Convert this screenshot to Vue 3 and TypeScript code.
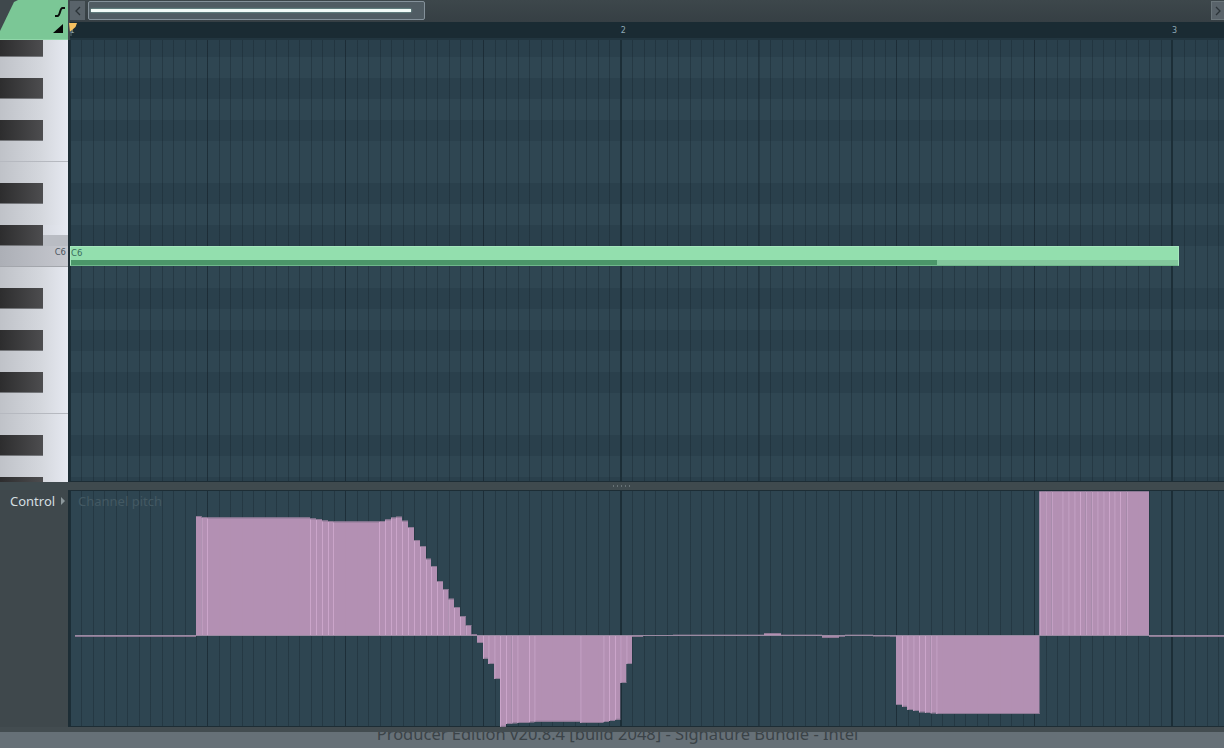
<script setup lang="ts">
// Piano roll with channel pitch lane below it
interface Row {
  black: boolean
  name: string
  split: boolean
}

// one octave from the top, first row is A#6 and it is cut by the ruler
const pattern: [boolean, string][] = [
  [true, 'A#'], [false, 'A'], [true, 'G#'], [false, 'G'], [true, 'F#'], [false, 'F'],
  [false, 'E'], [true, 'D#'], [false, 'D'], [true, 'C#'], [false, 'C'], [false, 'B'],
]

const rows: Row[] = Array.from({ length: 22 }, (_, i) => {
  const [black, name] = pattern[i % 12]
  return { black, name, split: name === 'F' }
})

const bars = [1, 2, 3]

// [x where the step starts, y of its free end], baseline is y = 635
const steps: [number, number][] = [
  [75, 636.6], [196, 516], [201.5, 517], [207, 517.5], [310, 518.5], [316, 519], [322, 520.5],
  [328, 521], [333, 521.5], [379, 521], [385, 519.5], [391, 517.5], [396, 516.7], [402, 520.7],
  [408, 527], [414, 540], [420, 546], [426, 558.7], [431, 566], [437, 581], [443, 589],
  [448.5, 598.7], [454, 607], [460, 616], [465.7, 625], [471.3, 634], [477, 643], [483, 658.7],
  [488.3, 664], [494.3, 679], [500, 726.7], [506, 724], [511.7, 723.3], [517.3, 723],
  [529, 722.3], [534.3, 721.7], [580.3, 723], [603.3, 722], [609, 721], [615, 719.7],
  [620.3, 683], [626.3, 664], [632, 636.7], [643, 636], [673, 635.6], [764, 633], [781, 635.6],
  [822, 637.7], [839, 636.5], [845, 635.6], [873, 636.3], [890, 636.5], [896, 705], [902, 706.7],
  [907.3, 710], [913.3, 711], [919, 712.3], [925, 713], [930.7, 713.3], [936.3, 714],
  [1039.5, 491], [1045.5, 491], [1051.7, 491], [1062.3, 491], [1068.3, 491], [1074.3, 491],
  [1080, 491], [1085.7, 491], [1091.7, 491], [1097.3, 491], [1103.3, 491], [1109, 491],
  [1114.3, 491], [1120, 491], [1126.7, 491], [1149, 637],
]

const ZERO = 635

const pitchBars = steps.map(([x, end], i) => {
  const next = i + 1 < steps.length ? steps[i + 1][0] : 1224
  const y = Math.min(end, ZERO)
  const h = Math.abs(end - ZERO)
  return {
    x,
    w: next - x,
    y,
    h,
    edge: end < ZERO ? y : end - 1,
    striped: h > 4 && i > 0 && Math.abs(steps[i - 1][1] - ZERO) > 4,
  }
})
</script>

<template>
  <div class="app">
    <header class="head">
      <div class="corner">
        <div class="tab"></div>
        <svg class="tab-icons" width="70" height="40" viewBox="0 0 70 40">
          <path d="M55 16h2.500c3 0 2-8 5-8h2.500" fill="none" stroke="#0b0f0c" stroke-width="2" />
          <path d="M53 33h10v-9z" fill="#060806" />
        </svg>
      </div>
      <div class="head-main">
        <div class="scroll">
          <button class="arrow">
            <svg width="6" height="10" viewBox="0 0 6 10"><path d="M5 1 1 5l4 4" fill="none" stroke="#2b3338" stroke-width="1.300" /></svg>
          </button>
          <div class="thumb"><span class="thumb-line"></span></div>
          <button class="arrow arrow-right">
            <svg width="6" height="10" viewBox="0 0 6 10"><path d="m1 1 4 4-4 4" fill="none" stroke="#2b3338" stroke-width="1.300" /></svg>
          </button>
        </div>
        <div class="ruler">
          <span v-for="bar in bars" :key="bar" class="bar-num">{{ bar }}</span>
          <svg class="flag" width="9" height="14" viewBox="0 0 9 14">
            <path d="M0 1h8L6.500 5 3 8 1 10z" fill="#f5c060" />
            <path d="M2 9v5" stroke="#5d6d70" stroke-width="1" />
          </svg>
        </div>
      </div>
    </header>

    <section class="roll">
      <div class="piano">
        <div class="piano-inner">
          <div
            v-for="(row, i) in rows"
            :key="i"
            class="key"
            :class="{ split: row.split, root: i === 10, 'root-top': i === 9 }"
          >
            <span v-if="row.black" class="black-key"></span>
            <span v-if="i === 10" class="key-name">C6</span>
          </div>
        </div>
      </div>
      <div class="grid">
        <div class="grid-inner">
          <div v-for="(row, i) in rows" :key="i" class="grid-row lines" :class="{ dark: row.black }">
            <div v-if="i === 10" class="note">
              <span class="note-name">C6</span>
              <span class="note-low"><span class="note-slide"></span></span>
            </div>
          </div>
        </div>
      </div>
    </section>

    <div class="divider"><span class="grip"></span></div>

    <section class="control">
      <div class="control-side">
        <span class="control-label">Control</span>
        <span class="control-arrow"></span>
      </div>
      <div class="graph lines">
        <span class="channel">Channel pitch</span>
        <svg class="pitch" width="1154" height="237" viewBox="70 490 1154 237">
          <g v-for="(bar, i) in pitchBars" :key="i">
            <rect :x="bar.x" :y="bar.y" :width="bar.w" :height="bar.h" fill="#b994b7" fill-opacity="0.96" />
            <rect :x="bar.x" :y="bar.edge" :width="bar.w" height="1" fill="#8d7a95" />
            <rect v-if="bar.striped" :x="bar.x" :y="bar.y + 1" width="1" :height="bar.h - 1" fill="#cba5ca" />
          </g>
          <rect x="75" y="635" width="1149" height="1" fill="#9a8aa2" />
        </svg>
      </div>
    </section>

    <div class="band"></div>
    <footer class="status">
      <span class="status-text">Producer Edition v20.8.4 [build 2048] - Signature Bundle - Intel</span>
    </footer>
  </div>
</template>

<style scoped>
.app {
  display: flex;
  flex-direction: column;
  width: 1224px;
  height: 748px;
  overflow: hidden;
  background: #3f484c;
  font-family: "Noto Sans", "DejaVu Sans", sans-serif;
}

.head {
  display: flex;
  flex: none;
  height: 40px;
}

.corner {
  position: relative;
  flex: none;
  width: 70px;
  background: #3f484c;
}

.tab {
  height: 39px;
  width: 68px;
  background: #7bc796;
  border-bottom: 1px solid #8fd6a8;
  clip-path: polygon(0 100%, 0 31px, 14px 2px, 18px 0, 100% 0, 100% 100%);
}

.tab-icons {
  position: absolute;
  left: 0;
  top: 0;
}

.head-main {
  flex: 1;
  min-width: 0;
  display: flex;
  flex-direction: column;
}

.scroll {
  display: flex;
  align-items: stretch;
  gap: 3px;
  height: 22px;
  padding: 1px 0 2px;
  box-sizing: border-box;
  background: linear-gradient(#3d474b, #363f44);
}

.arrow {
  display: flex;
  align-items: center;
  justify-content: center;
  width: 15px;
  padding: 0;
  border: 0;
  background: #59636a;
}

.arrow-right {
  width: 13px;
  margin-left: auto;
  border: 1px solid #6b767b;
  border-right: 0;
}

.thumb {
  display: flex;
  align-items: center;
  width: 337px;
  padding: 0 13px 0 2px;
  box-sizing: border-box;
  border: 1px solid #84919a;
  border-radius: 2px;
  background: #505c63;
}

.thumb-line {
  flex: 1;
  height: 3px;
  background: #f2fbf8;
  box-shadow: 0 0 2px #8fd8c4;
}

.ruler {
  position: relative;
  display: flex;
  height: 18px;
  background: #1a2b33;
  border-bottom: 2px solid #223640;
  box-sizing: border-box;
}

.flag {
  position: absolute;
  left: -1px;
  top: 0;
}

.bar-num {
  flex: none;
  width: 551.2px;
  padding-top: 4px;
  box-sizing: border-box;
  text-indent: -0.500px;
  font-family: "DejaVu Sans", sans-serif;
  font-size: 8px;
  line-height: 10px;
  color: #8fa9b5;
}

.roll {
  display: flex;
  flex: none;
  height: 442px;
}

.piano {
  flex: none;
  width: 68px;
  overflow: hidden;
  border-right: 2px solid #1d2d35;
}

.piano-inner {
  margin-top: -4px;
}

.key {
  position: relative;
  display: flex;
  justify-content: flex-end;
  align-items: flex-start;
  height: 21px;
  box-sizing: border-box;
  background: linear-gradient(90deg, #bfc2c8, #d4d7dd 60%, #e6e9f1);
}

.key.split {
  border-bottom: 1px solid #b6b9c0;
}

.key.root {
  background: linear-gradient(90deg, #acafb6, #c6c8cf);
  border-bottom: 1px solid #a3a6ac;
}

.key.root-top {
  background: linear-gradient(transparent 10px, #b9bcc3 10px), linear-gradient(90deg, #bfc2c8, #e6e9f1);
}

.black-key {
  position: absolute;
  left: 0;
  top: 0;
  width: 43px;
  height: 21px;
  box-sizing: border-box;
  background: linear-gradient(90deg, #2d2d2e, #4d4d4f);
  border-bottom: 1px solid #74767a;
}

.key-name {
  padding: 1px 2px 0 0;
  font-family: "DejaVu Sans", sans-serif;
  font-size: 8.500px;
  line-height: 11px;
  color: #4b5660;
}

.grid {
  flex: 1;
  min-width: 0;
  overflow: hidden;
  border-bottom: 1px solid #1d2d35;
}

.grid-inner {
  margin-top: -4px;
}

.grid-row {
  height: 21px;
  background-color: #2f4652;
}

.grid-row.dark {
  background-color: #2a404c;
}

/* step, beat and bar lines, 69.7px is where bar 1 starts on the page */
.lines {
  background-image:
    repeating-linear-gradient(90deg, #1c2e37 -1.300px, #1c2e37 0.700px, transparent 0.700px, transparent 550px, #1c2e37 550px),
    repeating-linear-gradient(90deg, rgba(22, 36, 45, 0.5) -0.800px, rgba(22, 36, 45, 0.5) 0.200px, transparent 0.200px, transparent 137px, rgba(22, 36, 45, 0.5) 137px),
    repeating-linear-gradient(90deg, rgba(22, 36, 45, 0.38) -0.300px, rgba(22, 36, 45, 0.38) 0.700px, transparent 0.700px, transparent 11.183px);
}

.note {
  display: flex;
  flex-direction: column;
  width: 1109px;
  height: 20px;
  box-sizing: border-box;
  border: 1px solid #a5e6bd;
  border-bottom-color: #6fb78b;
  background: #93dfae;
}

.note-name {
  flex: 1;
  font-family: "DejaVu Sans", sans-serif;
  font-size: 8.500px;
  line-height: 12px;
  color: #3b6b5e;
}

.note-low {
  display: block;
  height: 5px;
  background: #82c79c;
}

.note-slide {
  display: block;
  width: 866px;
  height: 100%;
  background: #4b9669;
}

.divider {
  display: flex;
  justify-content: center;
  flex: none;
  height: 8px;
  background: #3f4a4e;
}

.grip {
  width: 20px;
  height: 2px;
  margin: 3px 0 0 21px;
  background: repeating-linear-gradient(90deg, #687377 0 1px, transparent 1px 4px);
}

.control {
  display: flex;
  flex: none;
  height: 237px;
}

.control-side {
  display: flex;
  align-items: flex-start;
  flex: none;
  width: 68px;
  padding: 2px 0 0 10px;
  box-sizing: border-box;
  background: #3f484c;
}

.control-label {
  font-size: 13px;
  line-height: 19px;
  color: #d5dfe1;
}

.control-arrow {
  width: 0;
  height: 0;
  margin: 5px 0 0 6px;
  border-left: 4px solid #8c979b;
  border-top: 4px solid transparent;
  border-bottom: 4px solid transparent;
}

.graph {
  position: relative;
  flex: 1;
  min-width: 0;
  background-color: #2e4551;
  border-left: 2px solid #1d2d35;
  border-top: 1px solid #1d2d35;
  border-bottom: 1px solid #1d2d35;
  box-sizing: border-box;
  background-origin: padding-box;
}

.channel {
  position: absolute;
  left: 8px;
  top: 1px;
  font-size: 13px;
  line-height: 19px;
  color: #435963;
}

.pitch {
  position: absolute;
  left: 0;
  top: -1px;
}

.band {
  flex: none;
  height: 5px;
  background: #434c50;
}

.status {
  flex: 1;
  overflow: hidden;
  display: flex;
  justify-content: center;
  background: #667077;
}

.status-text {
  margin: -8px 0 0 11px;
  font-size: 16.500px;
  line-height: 20px;
  white-space: nowrap;
  color: #3b4348;
}
</style>

<style>
body {
  background: #3f484c;
}
</style>
